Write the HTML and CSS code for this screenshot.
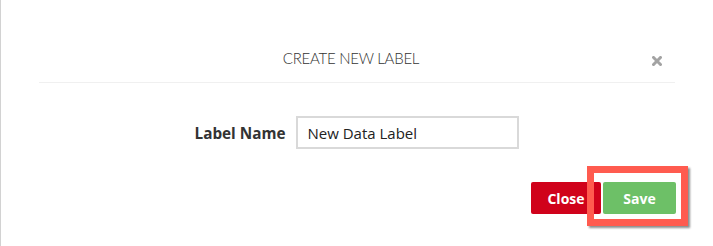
FILE: index.html
```html
<!DOCTYPE html>
<html lang="en">
<head>
<meta charset="utf-8">
<title>Create New Label</title>
<link rel="stylesheet" href="styles.css">
</head>
<body>
<div class="modal">
  <div class="modal-header">
    <h2 class="modal-title">CREATE NEW LABEL</h2>
    <button class="modal-close" aria-label="Close">
      <svg width="10" height="10" viewBox="0 0 10 10"><path d="M1.5 1.5 L8.5 8.5 M8.5 1.5 L1.5 8.5" stroke="#a3a3a3" stroke-width="3" stroke-linecap="square"/></svg>
    </button>
  </div>
  <div class="form-row">
    <label class="form-label" for="labelName">Label Name</label>
    <input class="form-input" id="labelName" type="text" value="New Data Label">
  </div>
  <div class="modal-footer">
    <button class="btn btn-close">Close</button>
    <button class="btn btn-save">Save<span class="highlight"></span></button>
  </div>
</div>
</body>
</html>
```

FILE: styles.css
```css
html, body {
  margin: 0;
  padding: 0;
  background: #ffffff;
}

.modal {
  box-sizing: border-box;
  height: 246px;
  border-left: 1px solid #d2d2d2;
  padding: 0 38px 0 38px;
  font-family: "Open Sans", "Liberation Sans", sans-serif;
}

.modal-header {
  display: flex;
  align-items: flex-start;
  padding: 48px 0 14px 0;
  border-bottom: 1px solid #f0f0f0;
}

.modal-title {
  flex: 1;
  margin: 0;
  padding-left: 11px;
  text-align: center;
  font-family: Lato, "Open Sans", sans-serif;
  font-weight: 300;
  font-size: 15px;
  line-height: 20px;
  letter-spacing: -0.25px;
  color: #333333;
}

.modal-close {
  margin: 8px 13px 0 0;
  padding: 0;
  width: 10px;
  height: 10px;
  border: none;
  background: none;
  display: flex;
}

.form-row {
  display: flex;
  justify-content: center;
  align-items: center;
  gap: 11px;
  margin-top: 33px;
}

.form-label {
  font-weight: 700;
  font-size: 15.3px;
  color: #333333;
}

.form-input {
  box-sizing: border-box;
  width: 223px;
  height: 33px;
  border: 2px solid #d9d9d9;
  padding: 0 9px;
  font-family: "Open Sans", "Liberation Sans", sans-serif;
  font-size: 15px;
  color: #222222;
  outline: none;
}

.modal-footer {
  display: flex;
  justify-content: flex-end;
  gap: 2px;
  margin-top: 33px;
}

.btn {
  height: 32px;
  border: none;
  border-radius: 2px;
  padding: 0;
  font-family: "Open Sans", "Liberation Sans", sans-serif;
  font-weight: 700;
  font-size: 14px;
  color: #ffffff;
}

.btn-close {
  width: 70px;
  background: #d0021b;
}

.btn-save {
  position: relative;
  width: 73px;
  background: #6dc067;
  margin-right: -1px;
}

.highlight {
  position: absolute;
  left: -16px;
  top: -16px;
  width: 101px;
  height: 60px;
  box-sizing: border-box;
  border: 7px solid #ff5b4f;
  box-shadow: 2px 2px 2px rgba(0, 0, 0, 0.45);
  pointer-events: none;
}
```
